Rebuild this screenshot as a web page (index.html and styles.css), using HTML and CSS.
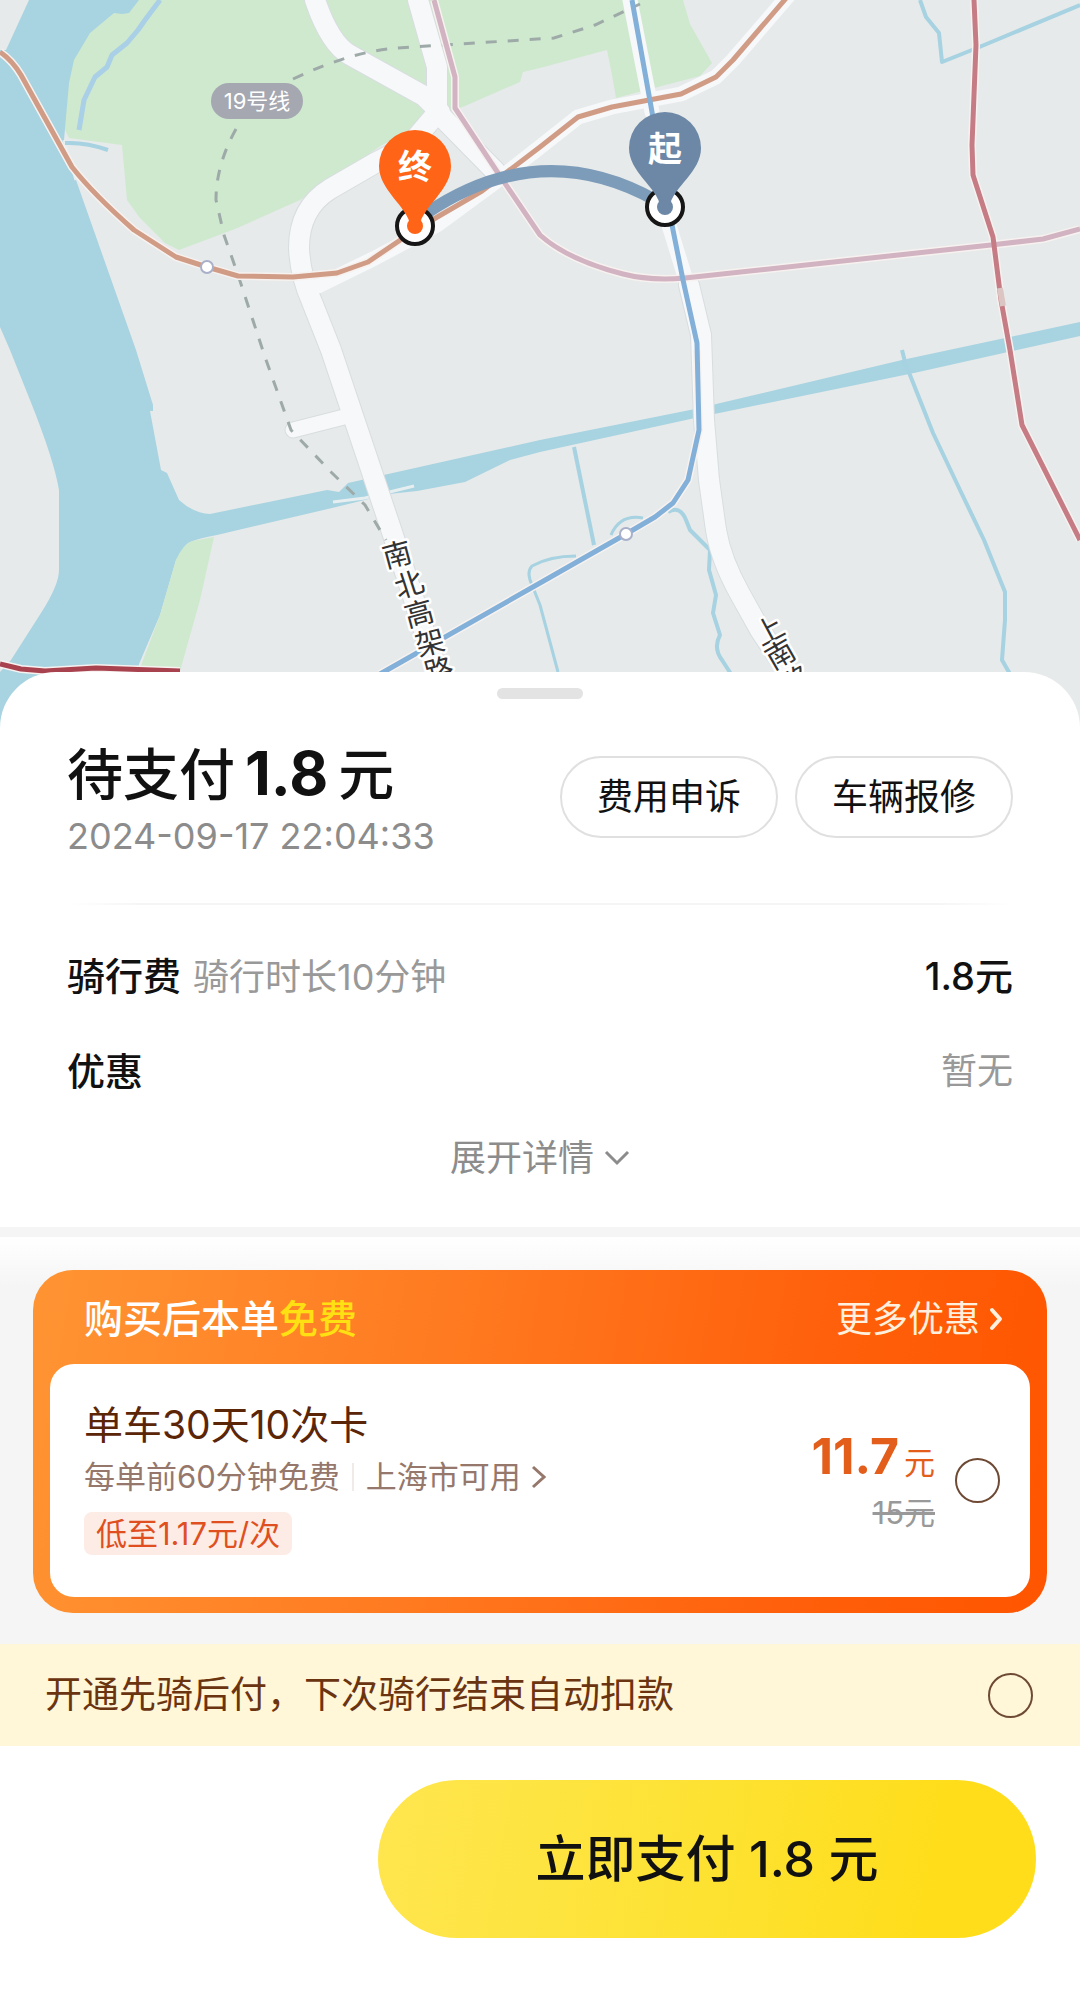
FILE: index.html
```html
<!DOCTYPE html>
<html lang="zh-CN">
<head>
  <meta charset="UTF-8">
  <meta name="viewport" content="width=device-width, initial-scale=1.0">
  <title>待支付</title>
  <link rel="stylesheet" href="styles.css">
</head>
<body>
  <!-- 地图 -->
  <div class="map">
    <svg class="map-canvas" viewBox="0 0 1080 740" role="img" aria-label="骑行路线">
      <rect class="land" width="1080" height="740"/>

      <!-- 绿地 -->
      <path class="park" d="M139 0H683L690 24 712 63 700 76 616 98 612 75 607 50 540 68 523 72 520 82 465 106 440 115 382 145 300 200 235 229 179 250 165 243 140 218 127 200 122 145 69 138 50 100 60 0Z"/>

      <!-- 黄浦江和川杨河 -->
      <path class="water" d="M29 0H139L129 13 122 14 114 13 90 33 74 60 69 83 64 140 76 180 136 350 153 405 153 411 150 411 161 470 167 473 179 500Q193 513 210 514L327 490 339 492 348 483 540 440 695 409 902 360 1080 322V336L914 373 695 418 540 452 510 460 465 482 417 491 389 494 332 508 217 535Q190 540 186 545L176 560 160 615 139 664 130 740H0V672L11 660 41 613Q59 585 59 570V490Q54 460 30 400L10 350 0 327V50H6Z"/>
      <path class="park" d="M192 541 214 537 200 600 180 671H139L160 615 176 560Q183 544 192 541Z"/>
      <path class="shore" d="M64 140 76 180M333 502 365 498 414 486"/>
      <g class="stream">
        <path class="creek" d="M160 0 145 20 138 30 127 43 112 55 107 67 95 77 84 100 79 130"/>
        <path d="M65 143Q86 142 108 150"/>
        <path d="M920 0 926 17 939 33 942 62 977 48 1080 5"/>
        <path d="M902 350 906 366 910 375 933 433 960 490 984 540 1005 592V620L1002 660 1010 674"/>
        <path d="M574 447 594 545"/>
        <path d="M668 512Q680 505 686 520L690 530 710 550 709 570 716 595 713 613 720 635Q713 648 722 660L731 674"/>
        <path class="thin" d="M611 535Q620 514 643 518M576 556Q550 556 532 566 526 572 532 585L540 605 558 672"/>
      </g>

      <!-- 道路 -->
      <g class="road-edge">
        <path d="M315 0Q330 44 350 55L424 96 440 112"/>
        <path d="M418 0 437 67V112L496 172"/>
        <path d="M438 112 410 145 375 163 330 189Q299 208 299 248 300 275 312 302L331 350 393 535 440 680"/>
        <path class="mid" d="M293 430 344 417"/>
        <path d="M689 285 701 335 704 420 709 480 716 530Q721 560 740 594L760 630 800 690"/>
      </g>
      <g class="road">
        <path d="M315 0Q330 44 350 55L424 96 440 112"/>
        <path d="M418 0 437 67V112L496 172"/>
        <path d="M438 112 410 145 375 163 330 189Q299 208 299 248 300 275 312 302L331 350 393 535 440 680"/>
        <path class="mid" d="M293 430 344 417"/>
        <path d="M689 285 701 335 704 420 709 480 716 530Q721 560 740 594L760 630 800 690"/>
        <path class="mid" d="M318 286 375 258 437 225 490 186 540 147 578 117 612 107 681 94 716 77 733 60 788 -4"/>
        <path class="mid" d="M630 0 652 112M668 222 689 290"/>
      </g>

      <!-- 规划中的19号线 -->
      <path class="planned" d="M293 79Q350 52 396 48L554 38 595 25 640 4"/>
      <path class="planned" d="M236 129Q216 165 216 200L224 235 238 275 265 357 291 430 331 472 365 505 386 540"/>

      <!-- 地铁 -->
      <g class="metro-case">
        <path d="M0 52Q12 60 21 75L72 167Q94 195 134 230L176 257 207 267 238 276 293 277 337 273 368 262 415 230"/>
        <path d="M434 0 455 77V108L496 170 540 235Q568 260 623 274 650 281 685 278L991 245 1043 239 1080 229"/>
        <path d="M697 350 699 430 688 480 673 503 655 517 626 534 540 583 380 674"/>
        <path d="M974 0 976 45 972 145 973 175 993 237 1001 300 1010 350 1022 425 1080 540"/>
        <path d="M0 664 21 669 45 671 96 668 180 671"/>
      </g>
      <g class="metro">
        <path class="orange" d="M0 52Q12 60 21 75L72 167Q94 195 134 230L176 257 207 267 238 276 293 277 337 273 368 262 415 230 482 191 540 147 578 117 612 107 681 94 716 77 733 60 788 -4"/>
        <path class="pink" d="M434 0 455 77V108L496 170 540 235Q568 260 623 274 650 281 685 278L991 245 1043 239 1080 229"/>
        <path class="blue" d="M632 0 652 112 673 230 683 280 697 343 699 430 688 480 673 503 655 517 626 534 540 583 380 674"/>
        <path class="red" d="M974 0 976 45 972 145 973 175 993 237 1001 300 1010 350 1022 425 1080 540"/>
        <path class="darkred" d="M0 664 21 669 45 671 96 668 180 671"/>
      </g>
      <path class="faded" d="M1000 288 1003 306"/>
      <circle class="station" cx="207" cy="267" r="6"/>
      <circle class="station" cx="626" cy="534" r="6"/>

      <!-- 路名 -->
      <rect class="line-badge" x="211" y="83" width="92" height="36" rx="18"/>
      <text class="line-name" x="257" y="109">19号线</text>
      <g class="road-name">
        <text transform="translate(397 554) rotate(-15)" y="11">南</text>
        <text transform="translate(409 584) rotate(-18)" y="11">北</text>
        <text transform="translate(419 613) rotate(-15)" y="11">高</text>
        <text transform="translate(430 642) rotate(-15)" y="11">架</text>
        <text transform="translate(439 670) rotate(-15)" y="11">路</text>
        <text transform="translate(769 630) rotate(-28)" y="11">上</text>
        <text transform="translate(780 654) rotate(-30)" y="11">南</text>
        <text transform="translate(796 680) rotate(-30)" y="11">路</text>
      </g>

      <!-- 行程 -->
      <path class="trip" d="M425 214Q540 136 655 200"/>
      <g class="pin pin-end">
        <circle class="ring" cx="415" cy="226" r="18"/>
        <circle cx="415" cy="226" r="8"/>
        <path d="M415 130A36 36 0 0 1 451 166C451 190 424 205 419 226H411C406 205 379 190 379 166A36 36 0 0 1 415 130Z"/>
        <text x="415" y="179">终</text>
      </g>
      <g class="pin pin-start">
        <circle class="ring" cx="665" cy="207" r="18"/>
        <circle cx="665" cy="207" r="8"/>
        <path d="M665 112A36 36 0 0 1 701 148C701 172 674 186 669 207H661C656 186 629 172 629 148A36 36 0 0 1 665 112Z"/>
        <text x="665" y="161">起</text>
      </g>
    </svg>
  </div>

  <!-- 订单面板 -->
  <main class="sheet">
    <div class="handle"></div>

    <section class="bill">
      <div class="bill-head">
        <div>
          <h1>待支付<b>1.8</b>元</h1>
          <p class="time">2024-09-17 22:04:33</p>
        </div>
        <div class="actions">
          <button type="button">费用申诉</button>
          <button type="button">车辆报修</button>
        </div>
      </div>
      <div class="divider"></div>
      <div class="row">
        <p><strong>骑行费</strong><span class="note">骑行时长10分钟</span></p>
        <strong>1.8元</strong>
      </div>
      <div class="row">
        <strong>优惠</strong>
        <span class="note">暂无</span>
      </div>
      <button type="button" class="expand">展开详情
        <svg width="26" height="16" viewBox="0 0 26 16" aria-hidden="true"><path d="M2 2 13 13 24 2"/></svg>
      </button>
    </section>

    <!-- 次卡 -->
    <section class="promo">
      <div class="card">
        <div class="card-head">
          <h2>购买后本单<em>免费</em></h2>
          <a href="#">更多优惠
            <svg width="14" height="24" viewBox="0 0 14 24" aria-hidden="true"><path d="M3 3 11 12 3 21"/></svg>
          </a>
        </div>
        <div class="card-body">
          <div class="pass">
            <label class="pass-name" for="pass">单车30天10次卡</label>
            <p class="pass-info">每单前60分钟免费<i></i><a href="#">上海市可用
              <svg width="15" height="24" viewBox="0 0 15 24" aria-hidden="true"><path d="M2 2 13 12 2 22"/></svg>
            </a></p>
            <span class="tag">低至1.17元/次</span>
          </div>
          <div class="price">
            <p><b>11.7</b>元</p>
            <del>15元</del>
          </div>
          <input type="checkbox" id="pass" class="check">
        </div>
      </div>
    </section>

    <div class="autopay">
      <label for="autopay">开通先骑后付，下次骑行结束自动扣款</label>
      <input type="checkbox" id="autopay" class="check">
    </div>

    <div class="footer">
      <button type="button" class="pay">立即支付 1.8 元</button>
    </div>
  </main>
</body>
</html>
```
FILE: styles.css
```css
* { box-sizing: border-box; margin: 0; padding: 0; }
body {
  font-family: Inter, 'Noto Sans CJK SC', sans-serif;
  font-size: 36px;
  background: #fff;
  color: #111;
}
button {
  font: inherit;
  color: inherit;
  border: none;
  background: none;
  cursor: pointer;
}
a {
  color: inherit;
  text-decoration: none;
}
svg { display: block; }

/* 地图 */
.map-canvas {
  width: 100%;
  height: auto;
}
.map-canvas path { fill: none; }
.map-canvas .land { fill: #e6eaea; }
.map-canvas .park { fill: #cfe9cf; }
.map-canvas .water { fill: #a8d3e1; }
.shore {
  stroke: #e6eef0;
  stroke-width: 3;
}
.stream {
  stroke: #a6d2e1;
  stroke-width: 4;
  stroke-linejoin: round;
}
.stream .thin { stroke-width: 3; }
.creek {
  stroke: #a9d0e6;
  stroke-width: 5;
}
.road,
.road-edge {
  stroke: #f6f8fa;
  stroke-width: 20;
  stroke-linecap: round;
  stroke-linejoin: round;
}
.road .mid { stroke-width: 15; }
.road-edge {
  stroke: #d9dddf;
  stroke-width: 22;
}
.road-edge .mid { stroke-width: 17; }
.planned {
  stroke: #9eaaa8;
  stroke-width: 3;
  stroke-dasharray: 11 11;
}
.metro-case {
  stroke: #f7f2f0;
  stroke-width: 8;
}
.metro {
  stroke-width: 5;
  stroke-linejoin: round;
}
.orange { stroke: #d09c86; }
.pink { stroke: #d2b3c1; }
.blue { stroke: #82b0d9; }
.red { stroke: #c67c84; }
.darkred { stroke: #a9424f; }
.faded {
  stroke: #dcc6c3;
  stroke-width: 6;
}
.station {
  fill: #fff;
  stroke: #a9b0c9;
  stroke-width: 2;
}
.line-badge { fill: #a5a7b1; }
.line-name {
  fill: #fff;
  font-size: 22px;
  text-anchor: middle;
}
.road-name {
  fill: #333;
  stroke: #fff;
  stroke-width: 5;
  stroke-linejoin: round;
  paint-order: stroke;
  font-size: 29px;
  text-anchor: middle;
}
.trip {
  stroke: #7d9cba;
  stroke-width: 12;
}
.map-canvas .pin-end,
.map-canvas .pin-end path { fill: #ff6417; }
.map-canvas .pin-start,
.map-canvas .pin-start path { fill: #6c88a6; }
.pin .ring {
  fill: #fff;
  stroke: #161616;
  stroke-width: 4;
}
.pin text {
  fill: #fff;
  font-size: 34px;
  font-weight: 700;
  text-anchor: middle;
}

/* 订单面板 */
.sheet {
  position: relative;
  margin-top: -68px;
  padding-top: 16px;
  background: #fff;
  border-radius: 56px 56px 0 0;
}
.handle {
  width: 86px;
  height: 11px;
  margin: 0 auto;
  border-radius: 6px;
  background: #e3e3e3;
}
.bill {
  padding: 36px 67px 44px;
  border-bottom: 10px solid #f5f5f5;
}
.bill-head {
  display: flex;
  justify-content: space-between;
  align-items: center;
}
h1 {
  font-size: 56px;
  line-height: 76px;
  font-weight: 500;
}
h1 b {
  margin: 0 10px;
  font-size: 60px;
  font-weight: 700;
}
.time {
  line-height: 46px;
  color: #8c8c8c;
}
.actions {
  display: flex;
  gap: 17px;
}
.actions button {
  padding: 0 35px;
  line-height: 78px;
  border: 2px solid #e0e0e0;
  border-radius: 41px;
}
.divider {
  height: 2px;
  margin: 44px 0;
  background: linear-gradient(90deg, #fff, #f5f5f5 8%, #f5f5f5 92%, #fff);
}
.row {
  display: flex;
  justify-content: space-between;
  line-height: 54px;
  margin-bottom: 40px;
}
.row strong {
  font-size: 38px;
  font-weight: 500;
}
.row .note { color: #999; }
.row p .note { margin-left: 12px; }
.expand {
  display: flex;
  align-items: center;
  gap: 10px;
  margin: -5px auto 0;
  line-height: 50px;
  color: #8c8c8c;
}
.expand path {
  fill: none;
  stroke: #8c8c8c;
  stroke-width: 3;
}

/* 次卡 */
.promo {
  padding: 33px 33px 31px;
  background: linear-gradient(#fff, #f5f5f5 50px);
}
.card {
  padding: 0 17px 16px;
  border-radius: 40px;
  background: linear-gradient(100deg, #ff9433, #ff7a20 40%, #ff600b 75%, #ff5500);
}
.card-head {
  display: flex;
  justify-content: space-between;
  align-items: center;
  padding: 22px 27px 18px 34px;
  line-height: 54px;
  color: #fff;
}
.card-head h2 {
  font-size: 39px;
  font-weight: 500;
}
.card-head em {
  font-style: normal;
  color: #ffe013;
}
.card-head a {
  display: flex;
  align-items: center;
  gap: 9px;
  color: #fff0de;
}
.card-head path {
  fill: none;
  stroke: #fff0de;
  stroke-width: 4;
  stroke-linecap: round;
  stroke-linejoin: round;
}
.card-body {
  display: flex;
  align-items: center;
  padding: 34px 30px 34px 34px;
  border-radius: 24px;
  background: #fff;
}
.pass {
  flex: 1;
  padding-bottom: 8px;
}
.pass-name {
  display: block;
  font-size: 39px;
  line-height: 54px;
  color: #5b2507;
}
.pass-info {
  display: flex;
  align-items: center;
  margin-bottom: 10px;
  font-size: 31px;
  line-height: 50px;
  color: #95776b;
}
.pass-info i {
  width: 2px;
  height: 28px;
  margin: 0 12px;
  background: #f0ebe9;
}
.pass-info a {
  display: flex;
  align-items: center;
  gap: 10px;
}
.pass-info path {
  fill: none;
  stroke: #95776b;
  stroke-width: 3;
}
.tag {
  display: block;
  width: fit-content;
  padding: 0 12px;
  border-radius: 8px;
  background: #fdece6;
  font-size: 31px;
  line-height: 43px;
  color: #df4f20;
}
.price {
  margin-right: 20px;
  padding-top: 8px;
  font-size: 31px;
  line-height: 50px;
  text-align: right;
  color: #e35d1b;
}
.price b {
  margin-right: 5px;
  font-size: 50px;
}
.price del {
  display: block;
  color: #999;
}
.check {
  appearance: none;
  width: 45px;
  height: 45px;
  border: 2px solid #6e4a34;
  border-radius: 50%;
  cursor: pointer;
}
.check:checked { background: #ffdf20; }

/* 先骑后付 */
.autopay {
  display: flex;
  justify-content: space-between;
  align-items: center;
  padding: 24px 47px 24px 45px;
  font-size: 37px;
  line-height: 54px;
  color: #6b3410;
  background: #fff7d8;
}

/* 支付 */
.footer {
  padding: 34px 44px 68px 35%;
}
.pay {
  width: 100%;
  border-radius: 79px;
  background: linear-gradient(100deg, #ffe64f, #fde232 50%, #ffdd1a 85%);
  font-size: 50px;
  line-height: 158px;
  font-weight: 500;
}
```
